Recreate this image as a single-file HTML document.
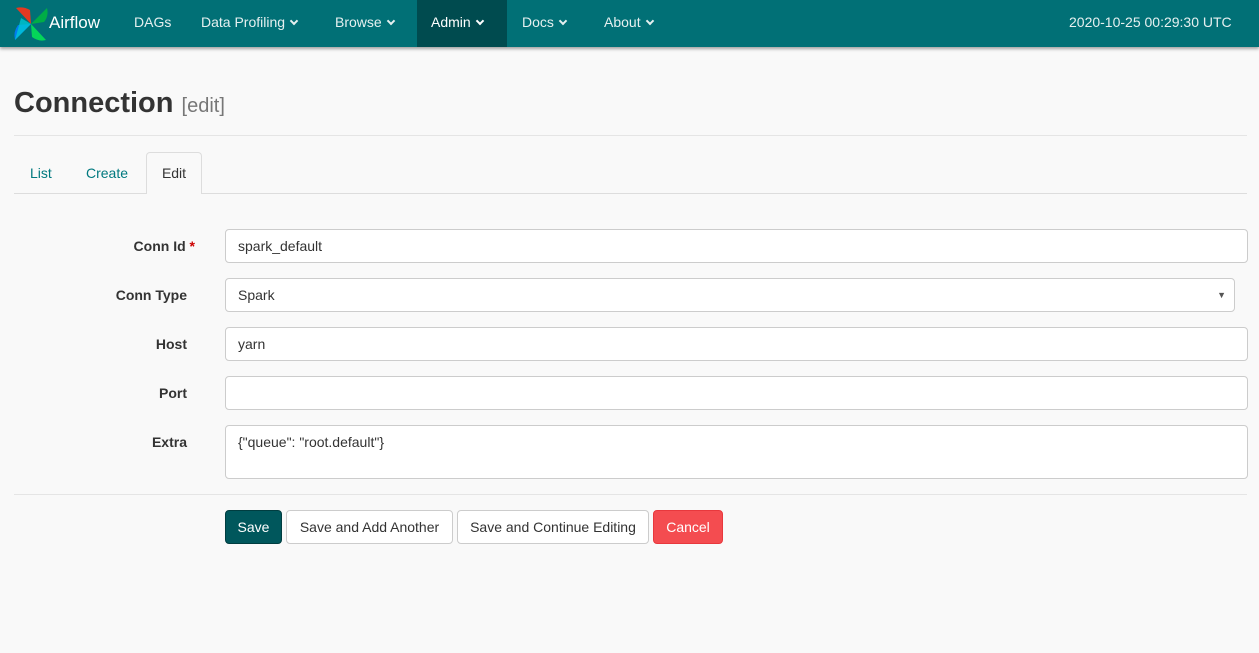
<!DOCTYPE html>
<html><head><style>
*{box-sizing:border-box;margin:0;padding:0}
body{width:1259px;height:653px;background:#f9f9f9;font-family:"Liberation Sans",sans-serif;font-size:14px;color:#333;position:relative;overflow:hidden}
.nav{position:absolute;left:0;top:0;width:1259px;height:47px;background:#017076;box-shadow:0 2px 3px rgba(0,0,0,.35)}
.nav a{position:absolute;top:0;height:47px;line-height:45px;color:#e6f0f0;font-size:14px;text-decoration:none}
.chev{display:inline-block;width:6px;height:6px;border-right:2px solid currentColor;border-bottom:2px solid currentColor;transform:rotate(45deg);margin-left:6px;position:relative;top:-3px}
.abs{position:absolute}
.lbl{position:absolute;right:1072px;font-weight:bold;font-size:14px;color:#333}
.inp{position:absolute;left:225px;background:#fff;border:1px solid #ccc;border-radius:4px;padding-left:12px;font-size:14px;color:#333;line-height:32px}
.btn{position:absolute;top:510px;height:34px;line-height:32px;border-radius:4px;border:1px solid #ccc;background:#fff;font-size:14px;text-align:center;color:#333}
</style></head><body>
<div class="nav">
<svg class="abs" style="left:13px;top:6px" width="36" height="36" viewBox="0 0 36 36">
<path d="M18 18 L3 2 Q10 0 17 4 Z" fill="#e43921"/>
<path d="M18 18 L34 2 Q36 10 31 16 Z" fill="#00ad46"/>
<path d="M18 18 L33 34 Q26 36 19 31 Z" fill="#04d659"/>
<path d="M18 18 L2 34 Q0 26 5 19 Z" fill="#017cee"/>
<path d="M18 18 L2 34 L8 12 Z" fill="#00c7d4" opacity=".8"/>
</svg>
<a style="left:49px;color:#fff;font-size:17px">Airflow</a>
<a style="left:134px">DAGs</a>
<a style="left:201px">Data Profiling<span class="chev"></span></a>
<a style="left:335px">Browse<span class="chev"></span></a>
<a style="left:417px;width:90px;background:#004b4f;padding-left:14px;color:#fff">Admin<span class="chev"></span></a>
<a style="left:522px">Docs<span class="chev"></span></a>
<a style="left:604px">About<span class="chev"></span></a>
<a style="left:1069px">2020-10-25 00:29:30 UTC</a>
</div>
<div class="abs" style="left:14px;top:87px;font-size:29px;font-weight:bold;color:#333">Connection <span style="font-size:20px;font-weight:normal;color:#777">[edit]</span></div>
<div class="abs" style="left:14px;top:135px;width:1233px;border-top:1px solid #e5e5e5"></div>
<div class="abs" style="left:14px;top:193px;width:1233px;border-top:1px solid #ddd"></div>
<div class="abs" style="left:30px;top:165px;color:#00797f">List</div>
<div class="abs" style="left:86px;top:165px;color:#00797f">Create</div>
<div class="abs" style="left:146px;top:152px;width:56px;height:42px;border:1px solid #ddd;border-bottom:none;border-radius:4px 4px 0 0;background:#f9f9f9;text-align:center;line-height:40px">Edit</div>
<div class="lbl" style="top:238px;right:1064px">Conn Id <span style="color:#c00">*</span></div>
<div class="inp" style="top:229px;width:1023px;height:34px">spark_default</div>
<div class="lbl" style="top:287px">Conn Type</div>
<div class="inp" style="top:278px;width:1010px;height:34px">Spark<span class="abs" style="right:8px;top:0;font-size:9px;color:#555">▼</span></div>
<div class="lbl" style="top:336px">Host</div>
<div class="inp" style="top:327px;width:1023px;height:34px">yarn</div>
<div class="lbl" style="top:385px">Port</div>
<div class="inp" style="top:376px;width:1023px;height:34px"></div>
<div class="lbl" style="top:434px">Extra</div>
<div class="inp" style="top:425px;width:1023px;height:54px;line-height:32px">{"queue": "root.default"}</div>
<div class="abs" style="left:14px;top:494px;width:1233px;border-top:1px solid #e5e5e5"></div>
<div class="btn" style="left:225px;width:57px;background:#00575c;border-color:#003d40;color:#fff">Save</div>
<div class="btn" style="left:286px;width:167px">Save and Add Another</div>
<div class="btn" style="left:457px;width:192px">Save and Continue Editing</div>
<div class="btn" style="left:653px;width:70px;background:#f44c50;border-color:#e8383d;color:#fff">Cancel</div>
</body></html>
